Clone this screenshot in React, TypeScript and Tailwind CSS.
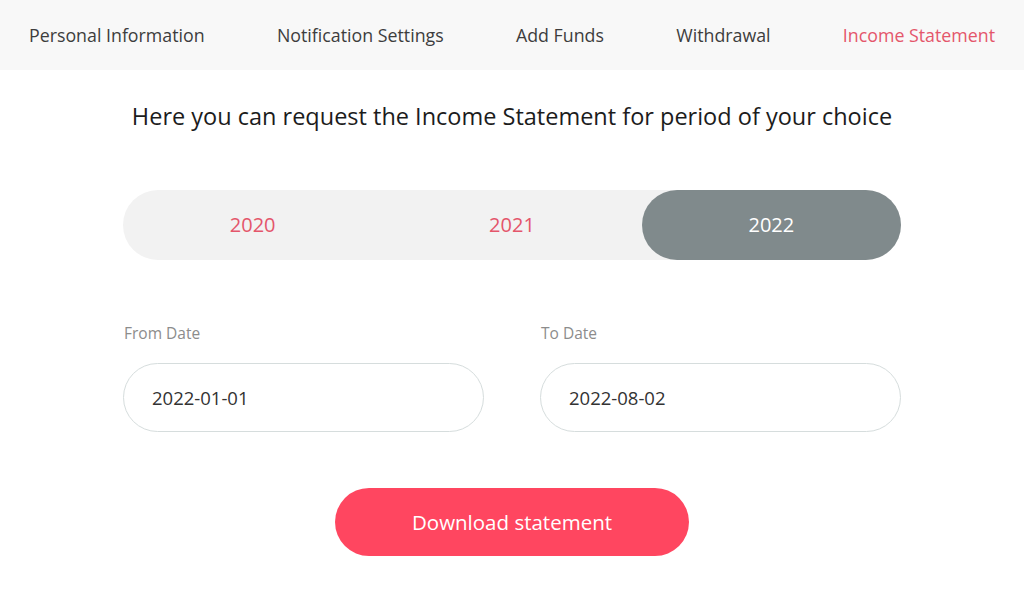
import React, { useState } from 'react';

const tabs = [
  'Personal Information',
  'Notification Settings',
  'Add Funds',
  'Withdrawal',
  'Income Statement',
];

const years = ['2020', '2021', '2022'];

export default function App() {
  const [year, setYear] = useState('2022');

  return (
    <div className="min-h-[596px] bg-white font-['Open_Sans',sans-serif]">
      {/* tab bar */}
      <div className="h-[70px] bg-[#f8f8f8] flex items-center justify-between px-[29px]">
        {tabs.map((t) => (
          <div
            key={t}
            className={`text-[17.8px] ${
              t === 'Income Statement' ? 'text-[#e4566b]' : 'text-[#3d3d3d]'
            }`}
          >
            {t}
          </div>
        ))}
      </div>

      <div className="w-[778px] mx-auto flex flex-col">
        <h1 className="mt-[32px] text-center text-[23.5px] leading-[28px] text-[#1c1c1c]">
          Here you can request the Income Statement for period of your choice
        </h1>

        {/* year switch */}
        <div className="mt-[60px] h-[70px] rounded-full bg-[#f2f2f2] grid grid-cols-3">
          {years.map((y) => (
            <button
              key={y}
              onClick={() => setYear(y)}
              className={`rounded-full text-[20px] ${
                y === year ? 'bg-[#808a8c] text-white' : 'text-[#e4566b]'
              }`}
            >
              {y}
            </button>
          ))}
        </div>

        {/* dates */}
        <div className="mt-[63px] grid grid-cols-2 gap-[56px]">
          <div className="flex flex-col">
            <label className="text-[15.5px] leading-[20px] text-[#8c8c8c] pl-px">From Date</label>
            <div className="mt-[20px] h-[69px] rounded-full border border-[#d6dddd] flex items-center pl-[28px] text-[18.5px] text-[#333]">
              2022-01-01
            </div>
          </div>
          <div className="flex flex-col">
            <label className="text-[15.5px] leading-[20px] text-[#8c8c8c] pl-px">To Date</label>
            <div className="mt-[20px] h-[69px] rounded-full border border-[#d6dddd] flex items-center pl-[28px] text-[18.5px] text-[#333]">
              2022-08-02
            </div>
          </div>
        </div>

        <button className="mt-[56px] mx-auto w-[354px] h-[68px] rounded-full bg-[#ff4660] text-white text-[20.5px]">
          Download statement
        </button>
      </div>
    </div>
  );
}
